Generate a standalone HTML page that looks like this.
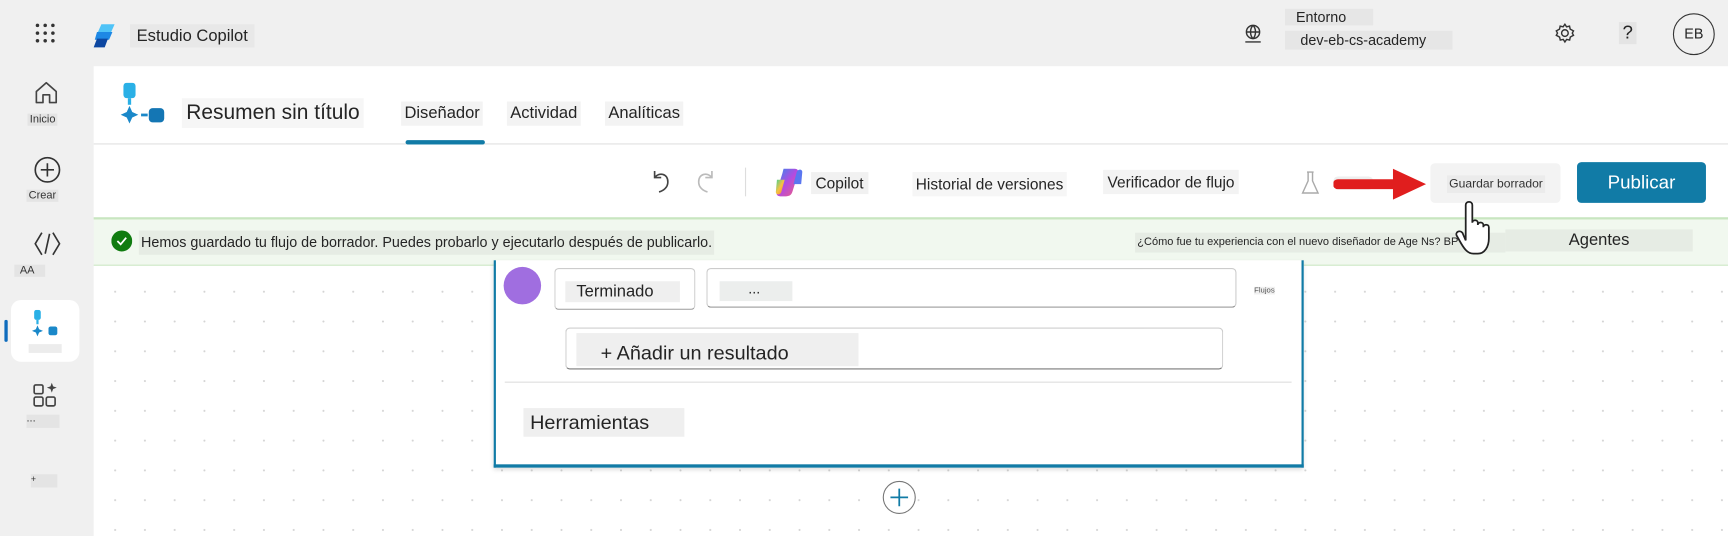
<!DOCTYPE html>
<html><head><meta charset="utf-8"><style>
*{box-sizing:border-box;margin:0;padding:0}
body{width:1728px;height:536px;overflow:hidden;font-family:"Liberation Sans","DejaVu Sans",sans-serif;color:#242424;background:#f0f0f0}
#w{position:absolute;left:0;top:0;width:1568px;height:486px;transform:scale(1.10204,1.1029);transform-origin:0 0;background:#f0f0f0}
.a{position:absolute;white-space:nowrap}
.lbl{font-size:10px;color:#333}
.canvas{position:absolute;left:85px;top:241px;width:1483px;height:245px;background-color:#fff;background-image:radial-gradient(#d4d4d4 0.7px,transparent 1.1px);background-size:27px 27px;background-position:6px 10px}
</style></head><body><div id="w">
<svg class="a" style="left:32px;top:21px" width="18" height="18"><g fill="#333"><circle cx="2" cy="2" r="1.6"/><circle cx="9" cy="2" r="1.6"/><circle cx="16" cy="2" r="1.6"/><circle cx="2" cy="9" r="1.6"/><circle cx="9" cy="9" r="1.6"/><circle cx="16" cy="9" r="1.6"/><circle cx="2" cy="16" r="1.6"/><circle cx="9" cy="16" r="1.6"/><circle cx="16" cy="16" r="1.6"/></g></svg>
<svg class="a" style="left:84px;top:20px" width="24" height="24"><path d="M8 2h12l-4 9H4z" fill="#4fc3f7"/><path d="M4 9h14l-3 7H2z" fill="#1e88e5"/><path d="M4 15h10l-3 8H1z" fill="#0d47a1"/></svg>
<div class="a" style="left:118px;top:22px;font-size:15px;background:#e8e8e8;padding:0 6px;height:21px;line-height:21px">Estudio Copilot</div>
<svg class="a" style="left:1127px;top:21px" width="20" height="20" fill="none" stroke="#333" stroke-width="1.3"><circle cx="10" cy="8" r="6"/><path d="M4 8h12M10 2c-3 3-3 9 0 12M10 2c3 3 3 9 0 12M3 17h14"/></svg>
<div class="a" style="left:1166px;top:8px;font-size:13px;background:#e6e6e6;width:80px;padding-left:10px;height:15px;line-height:15px">Entorno</div>
<div class="a" style="left:1166px;top:28px;font-size:13px;background:#e6e6e6;width:152px;padding-left:14px;height:17px;line-height:17px">dev-eb-cs-academy</div>
<svg class="a" style="left:1410px;top:20px" width="20" height="20" fill="none" stroke="#333" stroke-width="1.3"><circle cx="10" cy="10" r="3"/><path d="M10 2l1.5 2.3 2.7-.6.6 2.7L17.8 8 16.7 10l1.1 2-2.9 1.6-.6 2.7-2.7-.6L10 18l-1.5-2.3-2.7.6-.6-2.7L2.2 12 3.3 10 2.2 8l2.9-1.6.6-2.7 2.7.6z"/></svg>
<div class="a" style="left:1469px;top:20px;font-size:17px;background:#e4e4e4;width:16px;text-align:center">?</div>
<div class="a" style="left:1518px;top:12px;width:38px;height:38px;border:1px solid #333;border-radius:50%;text-align:center;line-height:36px;font-size:13px">EB</div>
<svg class="a" style="left:30px;top:72px" width="24" height="24" fill="none" stroke="#444" stroke-width="1.5"><path d="M3 11L12 3l9 8v10h-6v-7H9v7H3z" stroke-linejoin="round"/></svg>
<div class="a lbl" style="left:25px;top:103px;background:#e4e4e4;padding:0 2px">Inicio</div>
<svg class="a" style="left:31px;top:142px" width="24" height="24" fill="none" stroke="#333" stroke-width="1.5"><circle cx="12" cy="12" r="11"/><path d="M12 6v12M6 12h12"/></svg>
<div class="a lbl" style="left:24px;top:172px;background:#e4e4e4;padding:0 2px">Crear</div>
<svg class="a" style="left:30px;top:208px" width="26" height="26" fill="none" stroke="#333" stroke-width="1.5"><path d="M8 3L2 13l6 10M18 3l6 10-6 10M15 4l-4 18"/></svg>
<div class="a lbl" style="left:13px;top:240px;background:#e4e4e4;width:28px;padding-left:5px">AA</div>
<div class="a" style="left:10px;top:272px;width:62px;height:56px;background:#fff;border-radius:9px"></div>
<div class="a" style="left:4px;top:290px;width:3px;height:20px;background:#0f6cbd;border-radius:2px"></div>
<svg class="a" style="left:28px;top:281px" width="26" height="26"><rect x="3" y="0" width="6" height="9" rx="2" fill="#2ab0e6"/><rect x="5" y="9" width="2" height="4" fill="#2ab0e6"/><path d="M6 14l1.5 3.5L11 19l-3.5 1.5L6 24l-1.5-3.5L1 19l3.5-1.5z" fill="#1a88c9"/><rect x="16" y="15" width="8" height="8" rx="2" fill="#1a88c9"/></svg>
<div class="a" style="left:26px;top:312px;width:30px;height:8px;background:#ececec"></div>
<svg class="a" style="left:29px;top:345px" width="26" height="26" fill="none" stroke="#444" stroke-width="1.5"><rect x="2" y="4" width="8" height="8" rx="1.5"/><rect x="2" y="15" width="8" height="8" rx="1.5"/><rect x="13" y="15" width="8" height="8" rx="1.5"/><path d="M18 2l1.2 3.3L22.5 6.5 19.2 7.7 18 11l-1.2-3.3L13.5 6.5l3.3-1.2z" fill="#444" stroke="none"/></svg>
<div class="a lbl" style="left:24px;top:376px;background:#e4e4e4;width:30px;height:12px;line-height:8px">...</div>
<div class="a lbl" style="left:28px;top:430px;background:#e4e4e4;width:24px;height:12px;font-size:8px">+</div>
<div class="a" style="left:85px;top:60px;width:1483px;height:71px;background:#fff;border-bottom:1px solid #e0e0e0"></div>
<svg class="a" style="left:107px;top:75px" width="46" height="44"><rect x="5" y="0" width="11" height="14" rx="3" fill="#2ab0e6"/><rect x="9" y="14" width="3" height="6" fill="#2ab0e6"/><path d="M10.5 21l2.5 5.5 5.5 2.5-5.5 2.5-2.5 5.5-2.5-5.5L2.5 29l5.5-2.5z" fill="#1a88c9"/><rect x="21" y="28" width="6" height="2.5" fill="#1a88c9"/><rect x="28" y="23" width="14" height="13" rx="3.5" fill="#1476b4"/></svg>
<div class="a" style="left:165px;top:89px;font-size:19px;background:#f6f6f6;padding:0 4px;height:27px;line-height:27px">Resumen sin título</div>
<div class="a" style="left:364px;top:92px;font-size:15px;background:#f3f3f3;padding:0 3px;height:22px;line-height:22px">Diseñador</div>
<div class="a" style="left:368px;top:127px;width:72px;height:4px;background:#117ba6;border-radius:2px"></div>
<div class="a" style="left:460px;top:92px;font-size:15px;background:#f3f3f3;padding:0 3px;height:22px;line-height:22px">Actividad</div>
<div class="a" style="left:549px;top:92px;font-size:15px;background:#f3f3f3;padding:0 3px;height:22px;line-height:22px">Analíticas</div>
<div class="a" style="left:85px;top:131px;width:1483px;height:66px;background:#fff"></div>
<svg class="a" style="left:590px;top:152px" width="22" height="24" fill="none" stroke="#444" stroke-width="1.5"><path d="M4 3v6h6M4 9c4-5 12-4 12 4 0 5-4 8-8 9"/></svg>
<svg class="a" style="left:628px;top:152px" width="22" height="24" fill="none" stroke="#bbb" stroke-width="1.5"><path d="M18 3v6h-6M18 9c-4-5-12-4-12 4 0 5 4 8 8 9"/></svg>
<div class="a" style="left:676px;top:152px;width:1px;height:26px;background:#ddd"></div>
<svg class="a" style="left:702px;top:151px" width="28" height="28"><defs><linearGradient id="g1" x1="0" y1="0" x2="1" y2="1"><stop offset="0" stop-color="#2b8cf0"/><stop offset=".5" stop-color="#b44be0"/><stop offset="1" stop-color="#f25f7a"/></linearGradient><linearGradient id="g2" x1="0" y1="0" x2="1" y2="1"><stop offset="0" stop-color="#42d392"/><stop offset=".5" stop-color="#f7c143"/><stop offset="1" stop-color="#f77a2f"/></linearGradient></defs><path d="M9 2h10c3 0 4 2 3 5l-5 16c-1 3-3 4-6 4H6c-3 0-4-2-3-5L8 6c.5-2 1-4 1-4z" fill="url(#g1)"/><path d="M3 12h7l-3 11c-1 3-5 3-5 0z" fill="url(#g2)"/><path d="M25 16h-7l3-11c1-3 5-3 5 0z" fill="#5a76f0"/></svg>
<div class="a" style="left:736px;top:156px;font-size:14px;background:#f1f1f1;padding:0 4px;height:20px;line-height:20px">Copilot</div>
<div class="a" style="left:828px;top:156px;font-size:14px;background:#f6f6f6;padding:0 3px;height:22px;line-height:22px">Historial de versiones</div>
<div class="a" style="left:1001px;top:154px;font-size:14px;background:#f3f3f3;padding:0 4px;height:22px;line-height:22px">Verificador de flujo</div>
<svg class="a" style="left:1180px;top:154px" width="18" height="24" fill="none" stroke="#aaa" stroke-width="1.3"><path d="M6 2h6M7 2v8L2 21h14L11 10V2"/></svg>
<div class="a" style="left:1210px;top:160px;width:36px;height:12px;background:#eee;border-radius:4px"></div>
<svg class="a" style="left:1210px;top:150px" width="86" height="34"><path d="M4 17h52" stroke="#e01e1e" stroke-width="9" stroke-linecap="round"/><path d="M54 3l30 14-30 14z" fill="#e01e1e"/></svg>
<div class="a" style="left:1298px;top:148px;width:118px;height:36px;background:#f3f3f3;border-radius:4px"></div>
<div class="a" style="left:1313px;top:159px;font-size:11px;background:#ebebeb;padding:0 2px;height:16px;line-height:16px;color:#333">Guardar borrador</div>
<div class="a" style="left:1431px;top:147px;width:117px;height:37px;background:#117ba6;border-radius:4px;color:#fff;font-size:17px;text-align:center;line-height:37px">Publicar</div>
<div class="a" style="left:85px;top:197px;width:1483px;height:44px;background:#f1f8ef;border-top:2px solid #c8e6c0;border-bottom:1px solid #c8e6c0"></div>
<svg class="a" style="left:101px;top:209px" width="19" height="19"><circle cx="9.5" cy="9.5" r="9.5" fill="#107c10"/><path d="M5.5 9.5l3 3 5-6" stroke="#fff" stroke-width="1.6" fill="none"/></svg>
<div class="a" style="left:126px;top:209px;font-size:13px;background:#e6ece4;padding:0 2px;height:22px;line-height:22px">Hemos guardado tu flujo de borrador. Puedes probarlo y ejecutarlo después de publicarlo.</div>
<div class="a" style="left:1030px;top:211px;font-size:10px;background:#e6ece4;padding:0 2px;width:336px;height:18px;line-height:18px">¿Cómo fue tu experiencia con el nuevo diseñador de Age Ns? BP X</div>
<div class="a" style="left:1366px;top:208px;font-size:15px;background:#e6ece4;width:170px;height:20px;line-height:20px;text-align:center">Agentes</div>
<div class="canvas"></div>
<div class="a" style="left:448px;top:236px;width:735px;height:188px;background:#fff;border:2px solid #117ba6;border-top:none;border-bottom-width:3px;box-shadow:0 2px 4px rgba(0,0,0,.15)"></div>
<div class="a" style="left:457px;top:242px;width:34px;height:34px;border-radius:50%;background:#a06ee0"></div>
<div class="a" style="left:503px;top:243px;width:128px;height:38px;border:1px solid #ccc;border-bottom-color:#999;border-radius:4px"></div>
<div class="a" style="left:513px;top:255px;font-size:15px;background:#efefef;width:104px;padding-left:10px;height:19px;line-height:19px">Terminado</div>
<div class="a" style="left:641px;top:243px;width:481px;height:36px;border:1px solid #ccc;border-bottom-color:#888;border-radius:4px"></div>
<div class="a" style="left:653px;top:255px;width:66px;height:18px;background:#eceeed;font-size:13px;padding-left:26px;line-height:14px">...</div>
<div class="a" style="left:1138px;top:260px;font-size:7px;color:#555;background:#f0f0f0">Flujos</div>
<div class="a" style="left:513px;top:297px;width:597px;height:38px;border:1px solid #ccc;border-bottom-color:#777;border-radius:4px"></div>
<div class="a" style="left:523px;top:302px;width:256px;height:30px;background:#efefef;font-size:18px;padding-left:22px;line-height:36px">+ Añadir un resultado</div>
<div class="a" style="left:458px;top:346px;width:714px;height:1px;background:#ddd"></div>
<div class="a" style="left:475px;top:370px;width:146px;height:26px;background:#efefef;font-size:18px;padding-left:6px;line-height:26px">Herramientas</div>
<div class="a" style="left:801px;top:436px;width:30px;height:30px;border-radius:50%;border:1px solid #777;background:#fff"></div>
<svg class="a" style="left:806px;top:441px" width="20" height="20" stroke="#117ba6" stroke-width="1.6"><path d="M10 2v16M2 10h16"/></svg>
<svg class="a" style="left:1318px;top:178px" width="42" height="60"><path d="M12 40V8c0-4 6-4 6 0v16c0-3 5-3 5 0v2c0-3 5-3 5 0v2c0-3 5-3 5 0v10c0 8-4 14-10 14h-4c-5 0-8-4-11-9l-4-7c-2-3 2-6 5-3z" fill="#fff" stroke="#222" stroke-width="1.6"/></svg>
</div></body></html>
